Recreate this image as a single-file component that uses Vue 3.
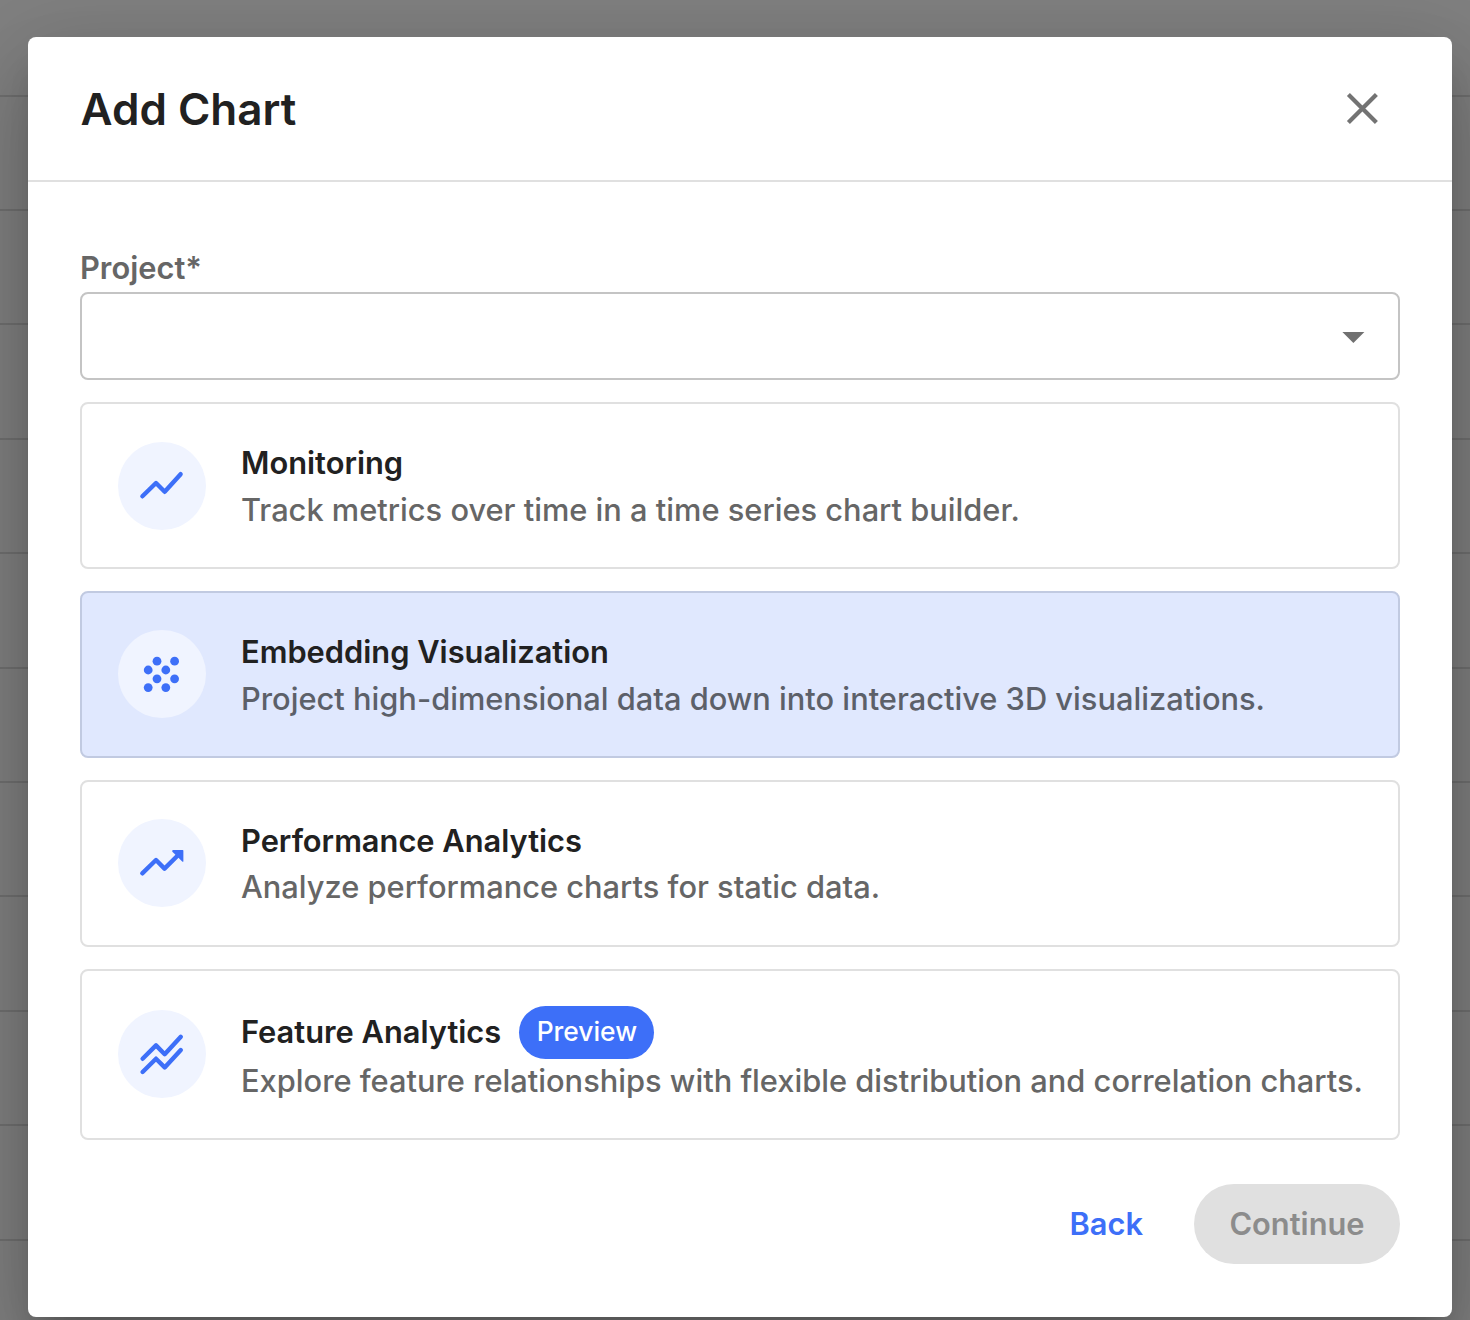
<script setup>
const options = [
  {
    id: 'monitoring',
    title: 'Monitoring',
    text: 'Track metrics over time in a time series chart builder.',
  },
  {
    id: 'embedding',
    title: 'Embedding Visualization',
    text: 'Project high-dimensional data down into interactive 3D visualizations.',
    selected: true,
  },
  {
    id: 'performance',
    title: 'Performance Analytics',
    text: 'Analyze performance charts for static data.',
  },
  {
    id: 'feature',
    title: 'Feature Analytics',
    text: 'Explore feature relationships with flexible distribution and correlation charts.',
    badge: 'Preview',
  },
]

const dots = [
  [39, 31.2], [56.6, 31.2],
  [30.2, 40], [47.8, 40],
  [39, 48.8], [56.6, 48.8],
  [30.2, 57.6], [47.8, 57.6],
]
</script>

<template>
  <div class="backdrop">
    <section class="dialog" role="dialog" aria-label="Add Chart">
      <header class="head">
        <h1>Add Chart</h1>
        <button class="close" aria-label="Close">
          <svg width="33" height="33" viewBox="0 0 33 33">
            <path d="M2.4 2.4L30.4 30.4M30.4 2.4L2.4 30.4" stroke="#737373" stroke-width="4.2" fill="none" />
          </svg>
        </button>
      </header>

      <div class="body">
        <label class="label">Project*</label>
        <div class="select">
          <svg width="23" height="11" viewBox="0 0 23 11"><path d="M0.4 0H22.4L11.4 11Z" fill="#707070" /></svg>
        </div>

        <div class="options">
          <article
            v-for="o in options"
            :key="o.id"
            class="card"
            :class="[o.id, { selected: o.selected }]"
          >
            <div class="icon">
              <svg width="88" height="88" viewBox="0 0 88 88">
                <path v-if="o.id === 'monitoring'" class="line" d="M24.4 54.3L38 41L46.7 49.8L62.6 32.2" />
                <g v-else-if="o.id === 'embedding'" fill="#3d6ff8">
                  <circle v-for="(d, i) in dots" :key="i" :cx="d[0]" :cy="d[1]" r="4.4" />
                </g>
                <template v-else-if="o.id === 'performance'">
                  <path class="line" d="M24.3 54.3L38 41L46.5 49.6L61 35.2" />
                  <path d="M55 31H64.6Q65.4 31 65.4 31.8V42.2Q65.2 43.2 64.2 42.6L54.4 32.8Q53.6 31.4 55 31Z" fill="#3d6ff8" />
                </template>
                <template v-else>
                  <path class="line" d="M24.6 48.8L38 35.4L46.7 44.2L62.8 26.8" />
                  <path class="line" d="M24.6 62L38 48.7L46.7 57.4L62.8 40" />
                </template>
              </svg>
            </div>
            <div class="copy">
              <div class="title-row">
                <h2>{{ o.title }}</h2>
                <span v-if="o.badge" class="badge">{{ o.badge }}</span>
              </div>
              <p>{{ o.text }}</p>
            </div>
          </article>
        </div>
      </div>

      <footer class="foot">
        <button class="back">Back</button>
        <button class="continue" disabled>Continue</button>
      </footer>
    </section>
  </div>
</template>

<style>
body {
  margin: 0;
}
</style>

<style scoped>
.backdrop {
  box-sizing: border-box;
  width: 1470px;
  height: 1320px;
  padding: 37px 18px 3px 28px;
  overflow: hidden;
  font-family: Inter, 'Liberation Sans', sans-serif;
  background: repeating-linear-gradient(#808080 0 94.6px, #707070 94.6px 96.6px, #808080 96.6px 114.4px);
}

.dialog {
  display: flex;
  flex-direction: column;
  height: 1280px;
  background: #fff;
  border-radius: 8px;
  box-shadow:
    0 22px 30px -14px rgba(0, 0, 0, 0.2),
    0 48px 76px 6px rgba(0, 0, 0, 0.14),
    0 18px 92px 16px rgba(0, 0, 0, 0.12);
}

.head {
  box-sizing: border-box;
  display: flex;
  align-items: center;
  justify-content: space-between;
  height: 145px;
  padding: 0 73px 0 52.6px;
  border-bottom: 2px solid #e0e0e0;
}

h1,
h2,
p {
  margin: 0;
}

h1 {
  color: #212121;
  font-size: 44px;
  font-weight: 600;
  line-height: 56px;
}

button {
  padding: 0;
  border: 0;
  background: none;
  font: inherit;
}

.close {
  display: flex;
}

.body {
  padding: 66px 52px 0;
}

.label {
  display: block;
  height: 44px;
  color: #666;
  font-size: 30.8px;
  font-weight: 600;
  line-height: 40px;
}

.select {
  box-sizing: border-box;
  display: flex;
  align-items: center;
  justify-content: flex-end;
  height: 88px;
  padding: 2px 33px 0 0;
  border: 2px solid #c4c4c4;
  border-radius: 8px;
}

.options {
  display: flex;
  flex-direction: column;
  gap: 22px;
  margin-top: 22px;
}

.card {
  box-sizing: border-box;
  display: flex;
  align-items: flex-start;
  gap: 35px;
  height: 167px;
  padding: 37px 0 0 36px;
  border: 2px solid #e0e0e0;
  border-radius: 8px;
}

.card.monitoring {
  padding-top: 38px;
}

.card.feature {
  height: 171px;
  padding-top: 39px;
}

.card.selected {
  background: #e0e8fe;
  border-color: #c1cae1;
}

.icon {
  width: 88px;
  height: 88px;
  flex: none;
  border-radius: 50%;
  background: #f0f4ff;
}

.icon svg {
  display: block;
}

.line {
  fill: none;
  stroke: #3d6ff8;
  stroke-width: 4.4;
  stroke-linecap: round;
  stroke-linejoin: round;
}

.copy {
  margin-top: -3px;
  white-space: nowrap;
}

.embedding .copy,
.performance .copy {
  margin-top: -2px;
}

.feature .copy {
  margin-top: -4px;
}

.title-row {
  display: flex;
  align-items: center;
  gap: 18px;
}

h2 {
  color: #212121;
  font-size: 30.8px;
  font-weight: 600;
  line-height: 47px;
}

.feature h2 {
  padding-bottom: 2px;
}

p {
  color: #666;
  font-size: 30.8px;
  font-weight: 500;
  line-height: 47px;
}

.performance p {
  line-height: 46px;
}

.feature p {
  margin-top: -2px;
}

.selected p {
  color: #5c6069;
}

.badge {
  height: 53px;
  padding: 0 17.4px;
  border-radius: 27px;
  background: #3d6ff8;
  color: #fff;
  font-size: 26.4px;
  font-weight: 500;
  line-height: 51px;
}

.foot {
  display: flex;
  align-items: center;
  justify-content: flex-end;
  gap: 51px;
  margin-top: 44px;
  padding-right: 52px;
  font-size: 30.8px;
  font-weight: 600;
}

.back,
.continue {
  padding-bottom: 2px;
}

.back {
  color: #3d6ff8;
}

.continue {
  width: 206px;
  height: 80px;
  border-radius: 40px;
  background: #e0e0e0;
  color: #8c8c8c;
}
</style>
